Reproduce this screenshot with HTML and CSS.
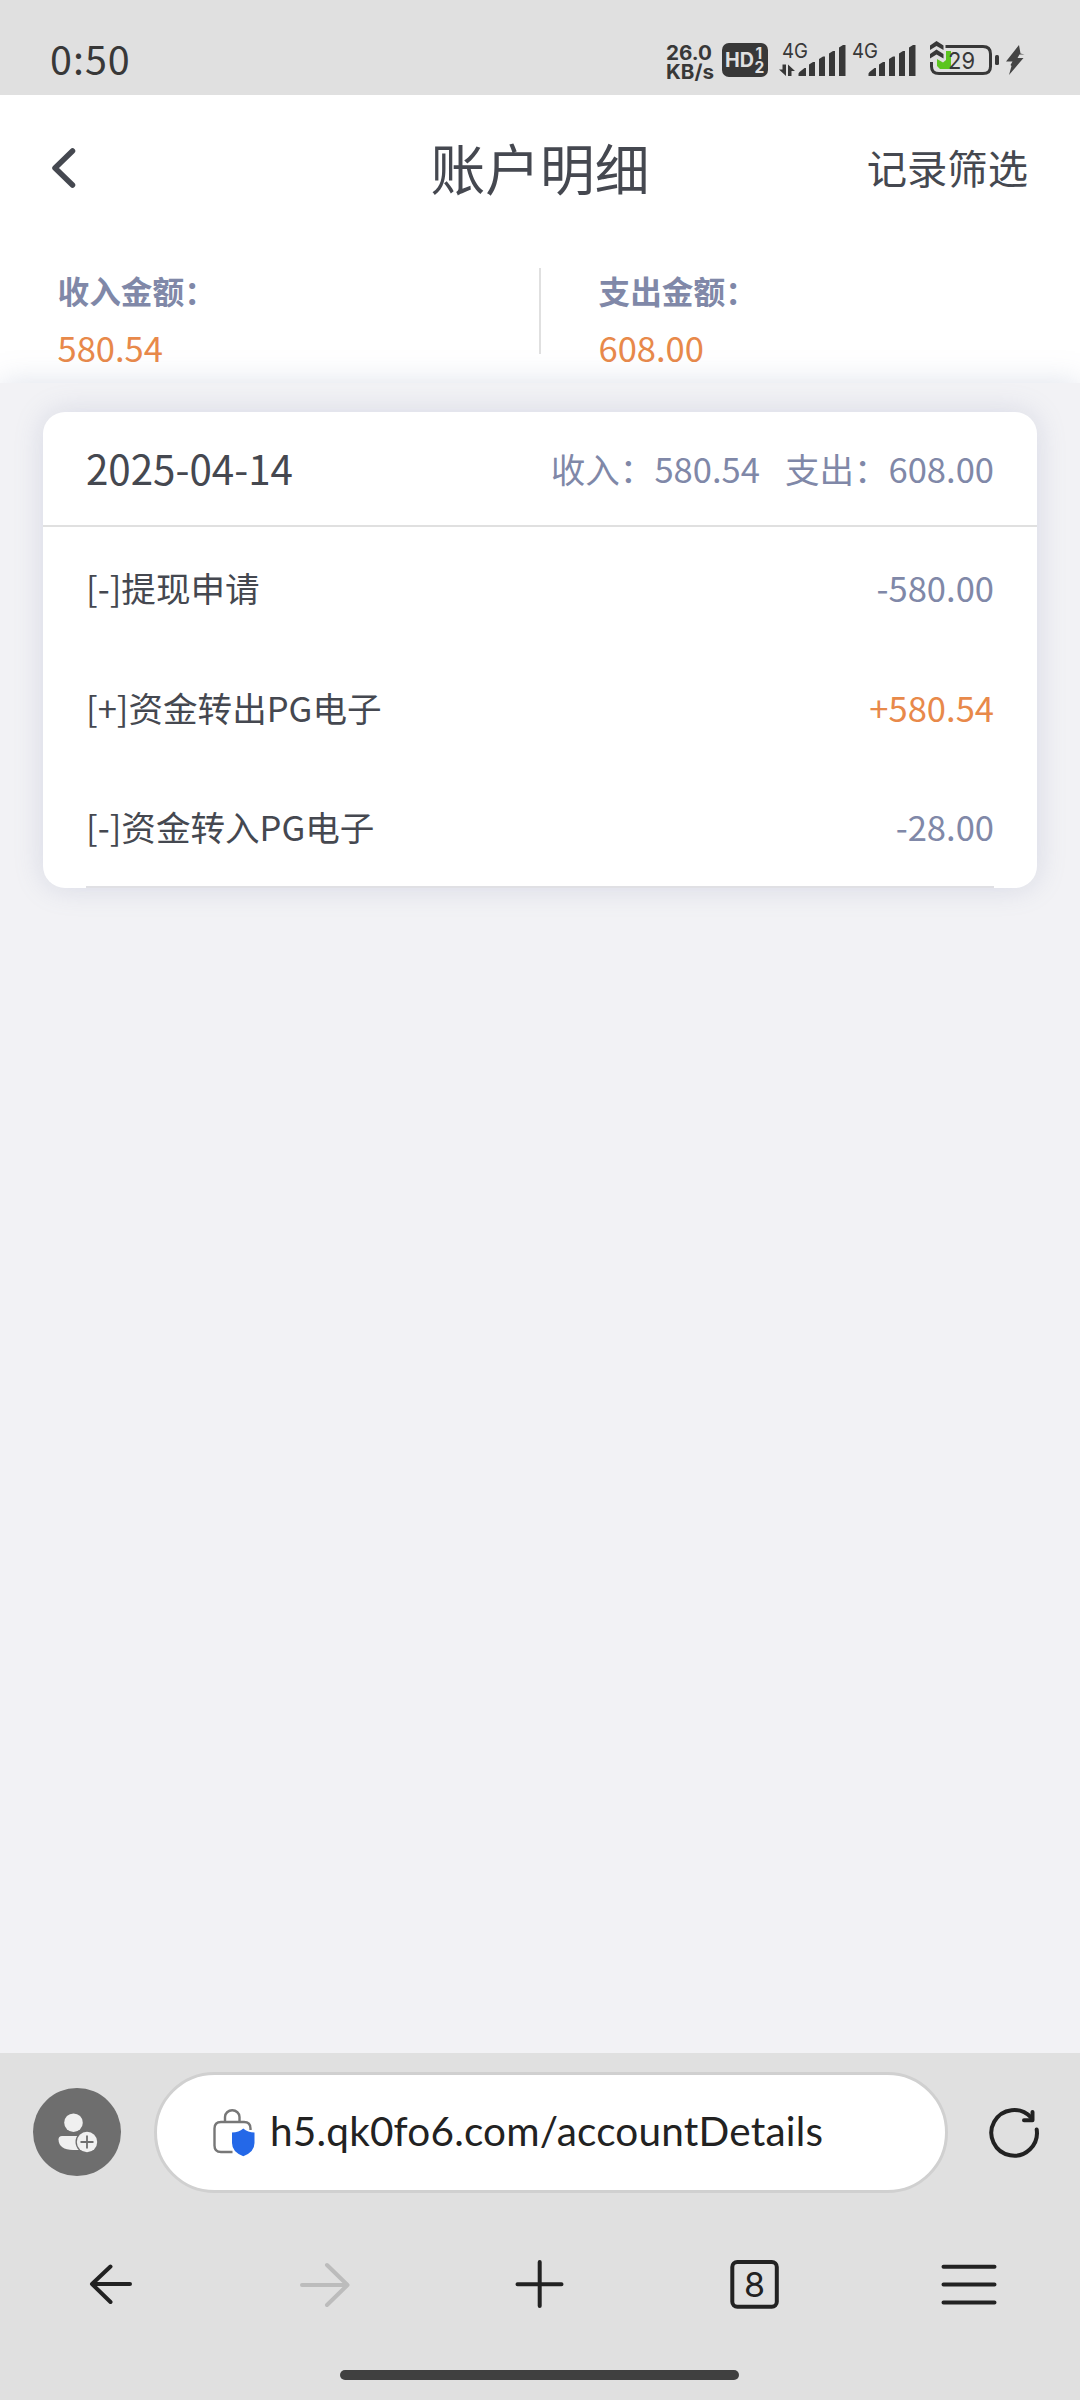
FILE: index.html
```html
<!DOCTYPE html>
<html lang="zh-CN">
<head>
<meta charset="utf-8">
<title>账户明细</title>
<link rel="stylesheet" href="styles.css">
</head>
<body>
<div class="phone">
  <div class="status">
    <span class="clock">0:50</span>
    <svg class="status-icons" width="366" height="56" viewBox="662 33 366 56">
      <g fill="#383838">
        <text class="st-net" x="666" y="60" textLength="46" lengthAdjust="spacingAndGlyphs">26.0</text>
        <text class="st-net" x="666" y="78.500" textLength="48" lengthAdjust="spacingAndGlyphs">KB/s</text>
        <rect x="722" y="43" width="46" height="34" rx="7"/>
        <text class="st-hd" x="725" y="67" textLength="29" lengthAdjust="spacingAndGlyphs">HD</text>
        <text class="st-sub" x="755.5" y="58.500">1</text>
        <text class="st-sub" x="754.5" y="73">2</text>
        <text class="st-4g" x="782" y="58" textLength="26" lengthAdjust="spacingAndGlyphs">4G</text>
        <text class="st-4g" x="852" y="58" textLength="26" lengthAdjust="spacingAndGlyphs">4G</text>
        <path d="M782.500 64.500h3.500V76L779 69.500h3.500zM788 76V64.500L795 71h-3.500v5z"/>
        <g id="bars">
          <path d="M798.500 76q-.5-3 1-4l5-4h1.500v8zM809 76V64.500l4-2.500h2v14zM819 76V59l4-2.500h2V76zM829 76V53.500l4-2.500h2v25zM839 76V47.500l4-2.500h2.500v31z"/>
        </g>
        <use href="#bars" x="70"/>
        <rect x="995" y="55" width="4" height="10" rx="1.500"/>
        <path d="M1019 45 1006 61.500h6.500l-2 3.500 1 1-2.500 9 14.500-17h-6l2-3.500h5l-4-1z" fill="#444"/>
        <path d="M930 45.500 936.500 41 943.500 45.500V50L936.500 46 930 50zM930 54 936.500 49.500 943.500 54V58.500L936.500 54.500 930 58.500z"/>
      </g>
      <path d="M937 59l6 3.500 3-2.500V51h5v18h-11l-3-3z" fill="#5bc51f"/>
      <path d="M945.500 46.500H983q7.500 0 7.500 7.500v12.500q0 7-7.500 7H939q-7.500 0-7.500-7V62" fill="none" stroke="#383838" stroke-width="3"/>
      <text class="st-batt" x="948" y="69" textLength="27" lengthAdjust="spacingAndGlyphs">29</text>
    </svg>
  </div>

  <header class="top">
    <svg class="back" width="28" height="44" viewBox="50 146 28 44"><path d="M72.500 151 55 168l17.500 17" fill="none" stroke="#454850" stroke-width="5.500" stroke-linecap="round" stroke-linejoin="round"/></svg>
    <h1 class="title">账户明细</h1>
    <span class="filter">记录筛选</span>
  </header>

  <section class="totals">
    <div class="total"><span class="total-label">收入金额：</span><span class="total-value">580.54</span></div>
    <div class="divider"></div>
    <div class="total"><span class="total-label">支出金额：</span><span class="total-value">608.00</span></div>
  </section>

  <main class="list">
    <article class="card">
      <div class="day">
        <span class="date">2025-04-14</span>
        <span>收入：580.54</span>
        <span>支出：608.00</span>
      </div>
      <div class="row"><span>[-]提现申请</span><span class="amount">-580.00</span></div>
      <div class="row"><span>[+]资金转出PG电子</span><span class="amount plus">+580.54</span></div>
      <div class="row"><span>[-]资金转入PG电子</span><span class="amount">-28.00</span></div>
      <div class="rule"></div>
    </article>
  </main>

  <footer class="browser">
    <div class="address">
      <svg class="avatar" width="88" height="88" viewBox="33 2088 88 88">
        <circle cx="77" cy="2132" r="44" fill="#6e6e6e"/>
        <circle cx="73.500" cy="2122.700" r="9.300" fill="#f0f0f0"/>
        <path d="M62 2136H86V2150H73C64 2150 58.500 2146 58.500 2139.500Q58.500 2136 62 2136z" fill="#f0f0f0"/>
        <circle cx="87" cy="2142" r="11.500" fill="#6e6e6e"/>
        <circle cx="87" cy="2142" r="10.200" fill="#f0f0f0"/>
        <path d="M80.500 2142h13M87 2135.500v13" stroke="#6e6e6e" stroke-width="1.800"/>
      </svg>
      <div class="url">
        <svg width="46" height="52" viewBox="211 2107 46 52">
          <g fill="none" stroke="#777" stroke-width="2.400">
            <path d="M225 2122.500v-4.500a7 6.500 0 0 1 14.500 0v4.500"/>
            <path d="M250.500 2131v-1.500q0-6.500-6.500-6.500h-23q-6.500 0-6.500 6.500v17q0 6.500 6.500 6.500h11.500"/>
          </g>
          <path d="M243.300 2129.500q4.500 4 11.200 4v10.500q0 9-11.200 13.200-11.300-4.200-11.300-13.200v-10.500q6.800 0 11.300-4z" fill="#2468e8"/>
        </svg>
        <span class="url-text">h5.qk0fo6.com/accountDetails</span>
      </div>
      <svg width="56" height="56" viewBox="986 2104 56 56" fill="none" stroke="#222" stroke-width="4" stroke-linecap="round" stroke-linejoin="round">
        <path d="M1036.700 2129.500A22.800 22.800 0 1 1 1031 2117.500"/><path d="M1032.500 2112v8.200h-8.500"/>
      </svg>
    </div>
    <nav class="tools">
      <svg width="60" height="60" viewBox="80 2254 60 60" class="ink"><path d="M130 2284H92M110.500 2266.500 92 2284 110.500 2302"/></svg>
      <svg width="60" height="60" viewBox="295 2254 60 60" class="ink off"><path d="M302 2285H347M327 2265 347.500 2285 327 2305"/></svg>
      <svg width="60" height="60" viewBox="508.500 2254 60 60" class="ink"><path d="M517 2284.200H561M539.200 2262v44"/></svg>
      <svg width="60" height="60" viewBox="724 2254 60 60" class="ink"><rect x="732.300" y="2262" width="44.500" height="44.700" rx="5"/><text class="tabs" x="754.500" y="2296.500">8</text></svg>
      <svg width="60" height="60" viewBox="939 2254 60 60" class="ink"><path d="M943.500 2266.700h51M943.500 2284.600h51M943.500 2302.500h51"/></svg>
    </nav>
    <div class="home"></div>
  </footer>
</div>
</body>
</html>
```

FILE: styles.css
```css
* { box-sizing: border-box; }
body {
  margin: 0;
  font-family: "Noto Sans CJK SC", sans-serif;
  color: #454850;
}
svg { display: block; flex: none; }
.phone {
  width: 1080px;
  height: 2400px;
  display: flex;
  flex-direction: column;
  background: #fff;
}

/* Status bar */
.status {
  height: 95px;
  padding: 0 52px 0 50px;
  background: #e0e0e0;
  display: flex;
  justify-content: space-between;
}
.clock { margin-top: 38px; font-size: 39.500px; line-height: 40px; letter-spacing: 1px; color: #383838; }
.status-icons { margin-top: 33px; }
.st-net, .st-hd, .st-sub, .st-4g, .st-batt { font-family: Inter, sans-serif; font-weight: 700; }
.st-net { font-size: 20px; }
.st-hd { font-size: 19.500px; fill: #e0e0e0; }
.st-sub { font-size: 15.500px; fill: #e0e0e0; }
.st-4g { font-size: 20.500px; font-weight: 400; }
.st-batt { font-size: 23.500px; font-weight: 400; fill: #383838; }

/* Page header */
.top {
  height: 144px;
  padding: 0 52px;
  display: grid;
  grid-template-columns: 1fr auto 1fr;
  align-items: center;
}
.title { margin: 0; font-size: 54.720px; font-weight: 400; line-height: 80px; }
.filter { justify-self: end; font-size: 40.320px; line-height: 60px; }
.back { margin: 2px 0 0 -2px; }

.totals { height: 144px; display: grid; grid-template-columns: 539px 2px 539px; }
.total { padding: 23px 0 0 57.500px; display: flex; flex-direction: column; line-height: 57px; }
.total-label { font-size: 31.680px; font-weight: 700; color: #8088a8; }
.total-value { font-size: 34.560px; color: #e8894a; }
.divider { height: 86px; margin-top: 29px; background: #e0e0e0; }

/* Records */
.list {
  height: 1670px;
  padding: 29px 43px;
  background: #f2f2f5;
  box-shadow: 0 0 29px rgba(125, 140, 175, .26);
}
.card {
  height: 476px;
  background: #fff;
  border-radius: 22px;
  box-shadow: 0 0 29px rgba(125, 135, 175, .24);
  font-size: 34.560px;
}
.day {
  height: 115px;
  padding: 0 43px 2px;
  border-bottom: 2px solid #e0e0e0;
  display: flex;
  align-items: center;
  gap: 25px;
  color: #8088a8;
}
.date { margin-right: auto; font-size: 40.320px; color: #454850; }
.row { height: 119.500px; padding: 1px 43px 0; display: flex; align-items: center; justify-content: space-between; }
.amount { color: #8088a8; }
.plus { color: #e8894a; }
.rule { height: 2px; margin: .5px 43px 0; background: #e0e0e4; }

/* Browser controls */
.browser { height: 347px; background: #e0e0e0; }
.address {
  height: 158px;
  padding: 0 38px 0 33px;
  display: flex;
  align-items: center;
}
.url {
  width: 794px;
  height: 121px;
  margin: 0 38px 0 33px;
  padding-left: 54px;
  border: 3px solid #d0d0d0;
  border-radius: 61px;
  background: #fff;
  display: flex;
  align-items: center;
  gap: 13px;
}
.url-text { margin-top: -3px; font-family: Lato, sans-serif; font-size: 40.500px; letter-spacing: .2px; color: #222; }
.tools { height: 145px; padding: 0 4px 0 3px; display: grid; grid-template-columns: repeat(5, 1fr); place-items: center; }
.ink { fill: none; stroke: #222; stroke-width: 4; stroke-linecap: round; stroke-linejoin: round; }
.off { stroke: #bcbcbc; }
.tabs { font-family: Inter, sans-serif; font-size: 34px; font-weight: 400; text-anchor: middle; fill: #222; stroke: none; }
.home { width: 399px; height: 10px; margin: 14px 0 0 340px; border-radius: 5px; background: #404040; }
```
